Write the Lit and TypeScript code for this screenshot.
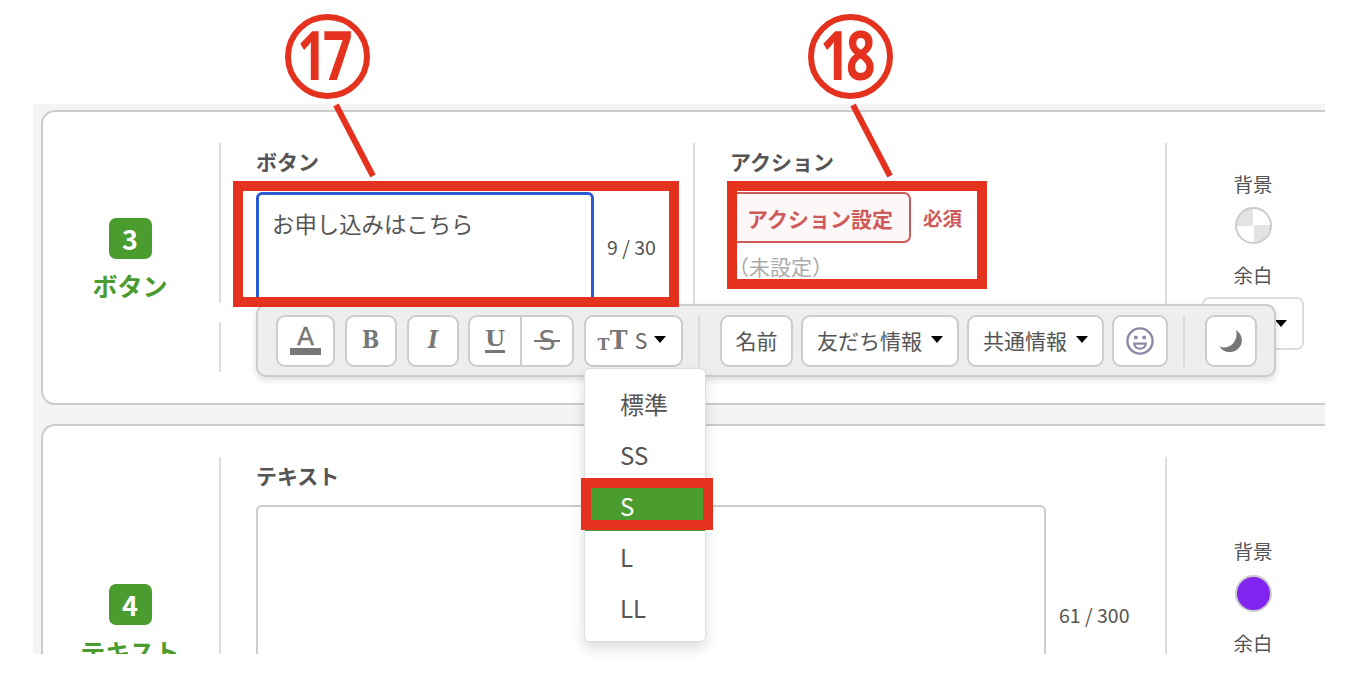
import { LitElement, html, css, svg } from "lit";
import { customElement } from "lit/decorators.js";

const arrow = html`<span class="arrow"></span>`;

@customElement("app-root")
export class AppRoot extends LitElement {
  static styles = css`
    :host {
      display: block;
      position: relative;
      width: 1346px;
      height: 680px;
      background: #fff;
      overflow: hidden;
      box-sizing: border-box;
      padding: 104px 21px 26px 33px;
      font-family: "Noto Sans CJK JP", "Noto Sans", sans-serif;
      color: #555;
    }
    * { box-sizing: border-box; }
    .frame {
      height: 550px;
      overflow: hidden;
      background: #f4f4f4;
      padding: 6px 0 0 8px;
    }
    .card {
      display: flex;
      width: 1330px;
      height: 295px;
      background: #fff;
      border: 2px solid #ccc;
      border-radius: 14px;
      padding: 31px 0;
      margin-bottom: 19px;
    }
    .card.tall { height: 420px; margin-bottom: 0; }
    .divider { width: 2px; flex: none; background: #ddd; }
    .divider.gapped {
      background: linear-gradient(#ddd 0 160px, transparent 160px 179px, #ddd 179px);
    }
    .kind {
      width: 176px;
      flex: none;
      display: flex;
      flex-direction: column;
      align-items: center;
      padding-top: 75px;
      padding-right: 2px;
    }
    .tall .kind { padding-top: 127px; }
    .badge {
      width: 43px;
      height: 41px;
      border-radius: 7px;
      background: #4a9c2f;
      color: #fff;
      font-size: 27px;
      font-weight: 700;
      display: flex;
      align-items: center;
      justify-content: center;
    }
    .kind-name {
      margin-top: 8px;
      font-size: 25px;
      line-height: 36px;
      font-weight: 700;
      color: #4a9c2f;
      white-space: nowrap;
    }
    .col { flex: none; padding: 4px 0 0 35px; }
    .col.text { width: 472px; }
    .col.action { width: 470px; }
    .col.wide { width: 944px; }
    .label {
      font-size: 21px;
      line-height: 28px;
      font-weight: 700;
      color: #555;
      margin-bottom: 17px;
      white-space: nowrap;
    }
    .tall .label { margin-bottom: 16px; }
    .field-row { display: flex; align-items: center; gap: 13px; }
    .box {
      width: 338px;
      height: 112px;
      border: 3px solid #2a5bd0;
      border-radius: 6px;
      padding: 12px 13px;
      font-size: 22.4px;
      line-height: 32px;
      background: #fff;
      white-space: nowrap;
    }
    .box.plain { width: 790px; height: 222px; border: 2px solid #ccc; }
    .count { font-size: 19.5px; line-height: 26px; padding-bottom: 3px; white-space: nowrap; }
    .action-row { display: flex; align-items: center; gap: 12px; }
    .action-btn {
      height: 51px;
      width: 181px;
      border: 2px solid #cf5a5a;
      border-radius: 7px;
      background: #fdf7f7;
      color: #cf5a5a;
      font-size: 21px;
      font-weight: 700;
      display: flex;
      align-items: center;
      padding-left: 15px;
      white-space: nowrap;
    }
    .required { color: #cf5a5a; font-size: 19.5px; font-weight: 700; white-space: nowrap; }
    .unset { margin-top: 12px; font-size: 21px; line-height: 22px; color: #aaa; white-space: nowrap; margin-left: -2px; }
    .side {
      width: 172px;
      flex: none;
      display: flex;
      flex-direction: column;
      align-items: center;
      padding-top: 28px;
    }
    .tall .side { padding-top: 81px; }
    .side-label { font-size: 19.5px; line-height: 26px; padding-bottom: 2px; white-space: nowrap; }
    .swatch {
      width: 37px;
      height: 37px;
      border-radius: 50%;
      border: 2px solid #ccc;
      margin-top: 8px;
      margin-bottom: 18px;
    }
    .swatch.clear { background: conic-gradient(#fff 0 25%, #e3e3e3 25% 50%, #fff 50% 75%, #e3e3e3 75%); }
    .swatch.purple { background: #8224f0; margin-top: 9px; margin-bottom: 18px; }
    .select {
      width: 102px;
      height: 53px;
      margin-top: 7px;
      border: 2px solid #ddd;
      border-radius: 7px;
      background: #fff;
      display: flex;
      align-items: center;
      justify-content: flex-end;
      padding-right: 15px;
    }
    .arrow {
      display: inline-block;
      width: 0;
      height: 0;
      border-left: 6.5px solid transparent;
      border-right: 6.5px solid transparent;
      border-top: 7px solid #000;
      flex: none;
    }

    .toolbar {
      position: absolute;
      left: 256px;
      top: 304px;
      width: 1020px;
      height: 73px;
      background: #eee;
      border: 2px solid #ccc;
      border-radius: 10px;
      box-shadow: 0 3px 6px rgba(0, 0, 0, 0.14);
      display: flex;
      align-items: center;
      gap: 8px;
      padding: 0 0 0 18px;
    }
    .btn {
      height: 52px;
      background: #fff;
      border: 2px solid #ccc;
      border-radius: 9px;
      display: flex;
      align-items: center;
      justify-content: center;
      flex: none;
      font-size: 21px;
      line-height: 28px;
      padding-bottom: 2px;
      color: #555;
      white-space: nowrap;
    }
    .w59 { width: 59px; }
    .w52 { width: 52px; margin-left: 2px; }
    .w106 { width: 106px; margin-left: 1px; padding: 0; }
    .w99 { width: 99px; margin-left: 2px; }
    .w73 { width: 73px; }
    .w158 { width: 158px; gap: 9px; }
    .w137 { width: 137px; gap: 9px; }
    .w56 { width: 56px; padding: 0; }
    .moon-btn { width: 52px; padding: 0; }
    .half {
      flex: 1;
      height: 100%;
      display: flex;
      align-items: center;
      justify-content: center;
    }
    .half + .half { border-left: 2px solid #ccc; }
    .sep { width: 2px; height: 52px; background: #ddd; flex: none; margin: 0 12px 0 7px; }
    .glyph { color: #777; line-height: 1; font-family: "DejaVu Serif", serif; font-weight: 700; }
    .glyph-a {
      display: flex;
      flex-direction: column;
      align-items: center;
      width: 31px;
      font-family: "DejaVu Sans", sans-serif;
      font-weight: 400;
      font-size: 25px;
      line-height: 24px;
      -webkit-text-stroke: 0.4px #777;
    }
    .glyph-a i { display: block; width: 31px; height: 7px; background: #777; margin-top: -1px; }
    .glyph-b { font-size: 25px; transform: scaleX(0.82); }
    .glyph-i { font-size: 25px; font-style: italic; transform: scaleX(0.85); }
    .glyph-u { font-size: 23px; line-height: 20px; border-bottom: 3px solid #777; padding-bottom: 2px; }
    .glyph-s {
      font-family: "DejaVu Sans", sans-serif;
      font-weight: 400;
      font-size: 27px;
      position: relative;
    }
    .glyph-s::after {
      content: "";
      position: absolute;
      left: -4px;
      right: -4px;
      top: 13px;
      height: 2px;
      background: #777;
    }
    .size-wrap { display: flex; align-items: center; gap: 7px; margin-left: -3px; }
    .tt { display: flex; align-items: flex-end; }
    .tt .small { font-size: 16px; line-height: 13px; }
    .tt .big { font-size: 26px; line-height: 22px; margin-left: -1px; transform: scaleX(0.92); }
    .size-s { font-size: 21px; color: #666; }

    .menu {
      position: absolute;
      left: 584px;
      top: 368px;
      width: 122px;
      height: 274px;
      background: #fff;
      border: 1px solid #ddd;
      border-radius: 6px;
      box-shadow: 0 6px 14px rgba(0, 0, 0, 0.14);
      padding: 9px 0;
    }
    .item {
      height: 51px;
      display: flex;
      align-items: center;
      padding-left: 35px;
      font-size: 24px;
      color: #555;
    }
    .item.on { background: #4a9c2f; color: #fff; }

    .mark { position: absolute; border: 10px solid #e5321f; }
    .m1 { left: 233px; top: 181px; width: 446px; height: 126px; }
    .m2 { left: 727px; top: 181px; width: 260px; height: 108px; }
    .m3 { left: 581px; top: 478px; width: 132px; height: 52px; }
    .num {
      position: absolute;
      width: 85px;
      height: 85px;
      top: 14px;
      border: 6.5px solid #e5321f;
      border-radius: 50%;
      background: #fff;
      color: #e5321f;
      display: flex;
      align-items: center;
      justify-content: center;
      font-family: "Open Sans", sans-serif;
      font-weight: 700;
      font-size: 68px;
      letter-spacing: -5px;
      line-height: 1;
    }
    .num span { display: block; transform: scaleX(0.76); margin: -5px 0 0 -9px; }
    .n1 { left: 285px; }
    .n2 { left: 808px; }
    .leaders { position: absolute; left: 0; top: 0; width: 1346px; height: 680px; pointer-events: none; }
    .leaders line { stroke: #e5321f; stroke-width: 6; }
  `;

  render() {
    return html`
      <div class="frame">
        <section class="card">
          <div class="kind"><div class="badge">3</div><div class="kind-name">ボタン</div></div>
          <div class="divider gapped"></div>
          <div class="col text">
            <div class="label">ボタン</div>
            <div class="field-row">
              <div class="box">お申し込みはこちら</div>
              <div class="count">9 / 30</div>
            </div>
          </div>
          <div class="divider"></div>
          <div class="col action">
            <div class="label">アクション</div>
            <div class="action-row">
              <div class="action-btn">アクション設定</div>
              <div class="required">必須</div>
            </div>
            <div class="unset">（未設定）</div>
          </div>
          <div class="divider"></div>
          <div class="side">
            <div class="side-label">背景</div>
            <div class="swatch clear"></div>
            <div class="side-label">余白</div>
            <div class="select">${arrow}</div>
          </div>
        </section>
        <section class="card tall">
          <div class="kind"><div class="badge">4</div><div class="kind-name">テキスト</div></div>
          <div class="divider"></div>
          <div class="col wide">
            <div class="label">テキスト</div>
            <div class="field-row">
              <div class="box plain"></div>
              <div class="count">61 / 300</div>
            </div>
          </div>
          <div class="divider"></div>
          <div class="side">
            <div class="side-label">背景</div>
            <div class="swatch purple"></div>
            <div class="side-label">余白</div>
          </div>
        </section>
      </div>

      <div class="toolbar">
        <div class="btn w59"><span class="glyph glyph-a">A<i></i></span></div>
        <div class="btn w52"><span class="glyph glyph-b">B</span></div>
        <div class="btn w52"><span class="glyph glyph-i">I</span></div>
        <div class="btn w106">
          <div class="half"><span class="glyph glyph-u">U</span></div>
          <div class="half"><span class="glyph glyph-s">S</span></div>
        </div>
        <div class="btn w99">
          <div class="size-wrap">
            <span class="glyph tt"><span class="small">T</span><span class="big">T</span></span>
            <span class="size-s">S</span>
            ${arrow}
          </div>
        </div>
        <div class="sep"></div>
        <div class="btn w73">名前</div>
        <div class="btn w158">友だち情報${arrow}</div>
        <div class="btn w137">共通情報${arrow}</div>
        <div class="btn w56">
          <svg width="30" height="30" viewBox="0 0 30 30" fill="none">
            <circle cx="15" cy="15" r="12.6" stroke="#8a8aa8" stroke-width="2.4"></circle>
            <circle cx="10.8" cy="11.5" r="2" fill="#8a8aa8"></circle>
            <circle cx="19.2" cy="11.5" r="2" fill="#8a8aa8"></circle>
            <path d="M8 16.5h14c0 4.4-3 7.2-7 7.2s-7-2.8-7-7.2z" fill="#8a8aa8"></path>
            <path d="M10.5 18.8h9c-.8 1.9-2.4 2.9-4.5 2.9s-3.700-1-4.500-2.900z" fill="#fff"></path>
          </svg>
        </div>
        <div class="sep"></div>
        <div class="btn moon-btn">
          <svg width="26" height="24" viewBox="0 0 26 24">
            <path d="M18 1c5.5 4 7 9.5 5.2 14.2C21.3 20.2 16.5 23 11.5 23 7 23 3.500 21 1.500 17.500c4.500 1.800 9.500 1 13-2.500C18 11.500 19.500 6 18 1z" fill="#777"></path>
          </svg>
        </div>
      </div>

      <div class="menu">
        <div class="item">標準</div>
        <div class="item">SS</div>
        <div class="item on">S</div>
        <div class="item">L</div>
        <div class="item">LL</div>
      </div>

      <div class="mark m1"></div>
      <div class="mark m2"></div>
      <div class="mark m3"></div>
      <div class="num n1"><span>17</span></div>
      <div class="num n2"><span>18</span></div>
      <svg class="leaders" viewBox="0 0 1346 680">
        ${svg`<line x1="336" y1="105" x2="373" y2="176"></line><line x1="853" y1="105" x2="890" y2="176"></line>`}
      </svg>
    `;
  }
}
